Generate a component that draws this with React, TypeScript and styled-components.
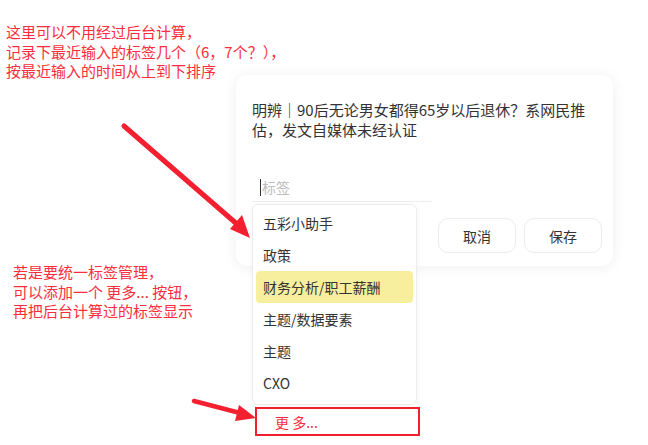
import React from "react";
import styled, { createGlobalStyle } from "styled-components";

const Global = createGlobalStyle`
  html, body { margin: 0; padding: 0; background: #ffffff; }
  body { font-family: "Noto Sans CJK SC", "Noto Sans", sans-serif; }
  * { box-sizing: border-box; }
`;

const RED = "#fd2d3d";

const Canvas = styled.div`
  position: relative;
  width: 648px;
  height: 445px;
  overflow: hidden;
  padding: 75px 0 0 236px;
  background: #fff;
`;

const Note = styled.div<{ $top: number; $left: number }>`
  position: absolute;
  top: ${(p) => p.$top}px;
  left: ${(p) => p.$left}px;
  color: ${RED};
  font-size: 15px;
  line-height: 19.5px;
  white-space: pre;
  z-index: 3;
`;

const Card = styled.div`
  position: relative;
  width: 377px;
  background: #fff;
  border-radius: 11px;
  box-shadow: 0 1px 14px rgba(0, 0, 0, 0.07);
  padding: 25px 11px 13px 16px;
  display: flex;
  flex-direction: column;
`;

const Title = styled.div`
  width: 340px;
  font-size: 15px;
  line-height: 20px;
  color: #333;
`;

const InputWrap = styled.div`
  position: relative;
  margin-top: 33px;
  width: 180px;
  height: 29px;
  border-bottom: 1px solid #ececec;
  display: flex;
  align-items: center;
  padding-left: 8px;
  z-index: 2;
`;

const Caret = styled.span`
  display: inline-block;
  width: 1px;
  height: 17px;
  background: #333;
`;

const Placeholder = styled.span`
  font-size: 14px;
  color: #bdbdbd;
  margin-left: 1px;
`;

const Popover = styled.div`
  position: absolute;
  top: calc(100% + 3px);
  left: 0;
  display: flex;
  flex-direction: column;
`;

const Menu = styled.div`
  width: 165px;
  background: #fff;
  border: 1px solid #ececec;
  border-radius: 6px;
  box-shadow: 0 1px 6px rgba(0, 0, 0, 0.04);
  padding: 2px 0 5px;
  display: flex;
  flex-direction: column;
`;

const Item = styled.div<{ $active?: boolean }>`
  height: 32px;
  display: flex;
  align-items: center;
  font-size: 14px;
  color: #333;
  margin: 0 ${(p) => (p.$active ? 3 : 0)}px;
  padding-left: ${(p) => (p.$active ? 7 : 10)}px;
  border-radius: 4px;
  background: ${(p) => (p.$active ? "#f8ef9e" : "transparent")};
`;

const MoreBox = styled.div`
  margin: 2px 0 0 3px;
  width: 165px;
  height: 29px;
  border: 2px solid #f0202e;
  display: flex;
  align-items: center;
  padding-left: 18px;
  font-size: 14px;
  color: ${RED};
  background: #fff;
`;

const ButtonRow = styled.div`
  margin-top: 16px;
  display: flex;
  justify-content: flex-end;
  gap: 8px;
`;

const Button = styled.div`
  width: 78px;
  height: 35px;
  border: 1px solid #ececec;
  border-radius: 10px;
  display: flex;
  align-items: center;
  justify-content: center;
  font-size: 14px;
  color: #333;
  background: #fff;
`;

const Arrows = styled.svg`
  position: absolute;
  inset: 0;
  pointer-events: none;
  z-index: 4;
`;

const items = ["五彩小助手", "政策", "财务分析/职工薪酬", "主题/数据要素", "主题", "CXO"];

export default function App() {
  return (
    <>
      <Global />
      <Canvas>
        <Note $top={22} $left={6}>
          {"这里可以不用经过后台计算，\n记录下最近输入的标签几个（6，7个？），\n按最近输入的时间从上到下排序"}
        </Note>
        <Note $top={262} $left={13}>
          {"若是要统一标签管理，\n可以添加一个 更多... 按钮，\n再把后台计算过的标签显示"}
        </Note>
        <Card>
          <Title>明辨｜90后无论男女都得65岁以后退休？系网民推估，发文自媒体未经认证</Title>
          <InputWrap>
            <Caret />
            <Placeholder>标签</Placeholder>
            <Popover>
              <Menu>
                {items.map((t, i) => (
                  <Item key={t} $active={i === 2}>
                    {t}
                  </Item>
                ))}
              </Menu>
              <MoreBox>更 多...</MoreBox>
            </Popover>
          </InputWrap>
          <ButtonRow>
            <Button>取消</Button>
            <Button>保存</Button>
          </ButtonRow>
        </Card>
        <Arrows width="648" height="445" viewBox="0 0 648 445">
          <line x1="124" y1="126" x2="238" y2="225" stroke="#f41f2f" strokeWidth="5" strokeLinecap="round" />
          <polygon points="250,238 230,229 242,215" fill="#f41f2f" />
          <line x1="194" y1="401" x2="240" y2="413" stroke="#f41f2f" strokeWidth="4.5" strokeLinecap="round" />
          <polygon points="256,418 235,421 239,405" fill="#f41f2f" />
        </Arrows>
      </Canvas>
    </>
  );
}
